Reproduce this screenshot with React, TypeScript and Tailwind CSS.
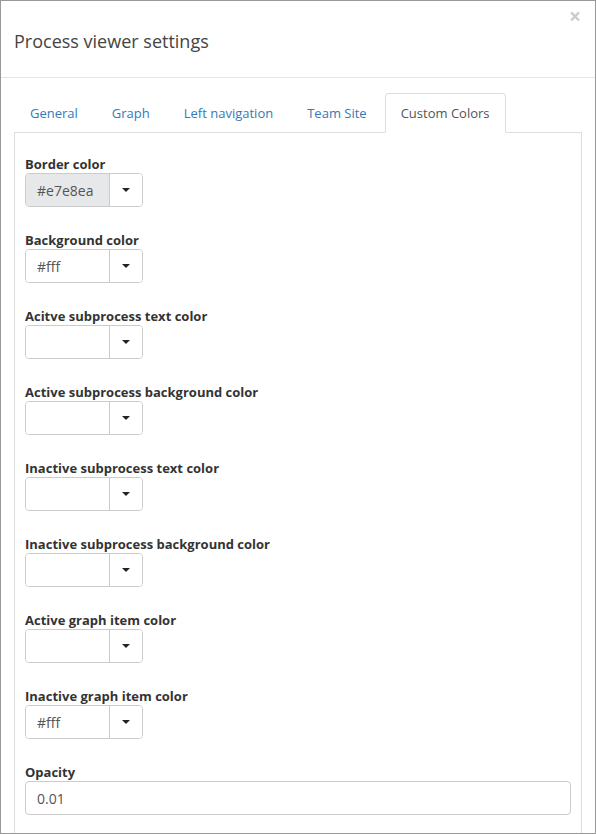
import React from 'react';

const tabs = ['General', 'Graph', 'Left navigation', 'Team Site', 'Custom Colors'];

const colorFields: { label: string; value: string; readOnly?: boolean }[] = [
    { label: 'Border color', value: '#e7e8ea', readOnly: true },
    { label: 'Background color', value: '#fff' },
    { label: 'Acitve subprocess text color', value: '' },
    { label: 'Active subprocess background color', value: '' },
    { label: 'Inactive subprocess text color', value: '' },
    { label: 'Inactive subprocess background color', value: '' },
    { label: 'Active graph item color', value: '' },
    { label: 'Inactive graph item color', value: '#fff' },
];

const ColorPicker: React.FC<{ value: string; readOnly?: boolean }> = ({ value, readOnly }) => (
    <div className="flex w-[118px] h-[34px] border border-[#ccc] rounded-[4px] overflow-hidden">
        <div
            className={`w-[83px] flex items-center pl-[11px] text-[14px] text-[#555] ${readOnly ? 'bg-[#e7e8ea]' : 'bg-white'}`}
        >
            {value}
        </div>
        <div className="flex-1 flex items-center justify-center border-l border-[#ccc] bg-white">
            <span className="block w-0 h-0 border-t-[4px] border-t-[#222] border-x-[4px] border-x-transparent" />
        </div>
    </div>
);

export default function App() {
    return (
        <div className="w-[596px] h-[834px] border border-[#999] overflow-hidden bg-white font-['Open_Sans',sans-serif]">
            {/* Header */}
            <div className="relative h-[77px] border-b border-[#e5e5e5] flex items-center pl-[13px] pt-[4px]">
                <h4 className="text-[18px] text-[#444] leading-none">Process viewer settings</h4>
                <span className="absolute right-[14px] top-[5px] text-[21px] font-bold text-black opacity-20 leading-none">
                    ×
                </span>
            </div>

            {/* Body */}
            <div className="px-[13px] pt-[15px]">
                <ul className="flex h-[39px]">
                    {tabs.map((tab) => {
                        const active = tab === 'Custom Colors';
                        return (
                            <li key={tab} className="mr-[2px]">
                                <a
                                    className={`flex items-center h-[40px] px-[15px] pt-[2px] text-[13px] rounded-t-[4px] border ${
                                        active
                                            ? 'border-[#ddd] border-b-white bg-white text-[#555]'
                                            : 'border-transparent text-[#337ab7]'
                                    }`}
                                >
                                    {tab}
                                </a>
                            </li>
                        );
                    })}
                </ul>

                <div className="border border-[#ddd] px-[10px] pt-[22px] pb-[20px]">
                    {colorFields.map((f) => (
                        <div key={f.label} className="mb-[24px]">
                            <label className="block text-[13px] leading-[18px] font-bold text-[#333]">{f.label}</label>
                            <ColorPicker value={f.value} readOnly={f.readOnly} />
                        </div>
                    ))}
                    <div className="mb-[24px]">
                        <label className="block text-[13px] leading-[18px] font-bold text-[#333]">Opacity</label>
                        <div className="h-[34px] border border-[#ccc] rounded-[4px] flex items-center pl-[11px] text-[14px] text-[#555]">
                            0.01
                        </div>
                    </div>
                </div>
            </div>
        </div>
    );
}
